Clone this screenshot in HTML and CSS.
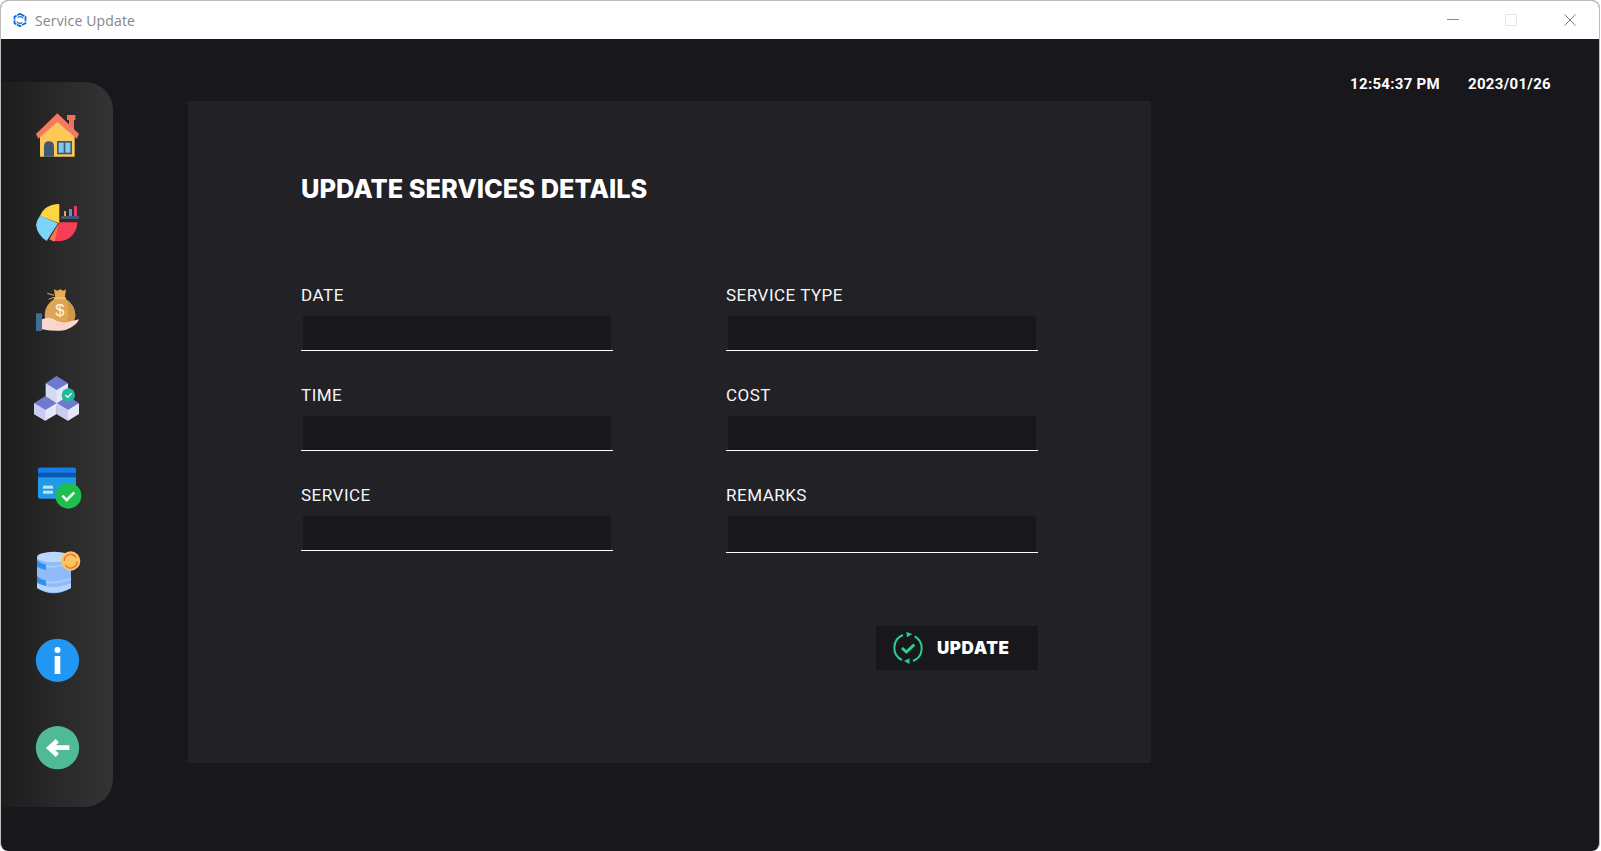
FILE: index.html
```html
<!DOCTYPE html>
<html lang="en">
<head>
<meta charset="utf-8">
<title>Service Update</title>
<link rel="stylesheet" href="styles.css">
</head>
<body>
<div class="window">
  <header class="titlebar">
    <svg class="app-icon" viewBox="0 0 14 14"><path d="M7 .8 12.500 3.800v6.400L7 13.200 1.500 10.200V3.800Z" fill="none" stroke="#1268d8" stroke-width="1.800" stroke-dasharray="5 .8"/><path d="M10 5.500A3.200 3.200 0 0 0 4.800 4.600M4 8.500A3.200 3.200 0 0 0 9.200 9.400" fill="none" stroke="#1a78e6" stroke-width="1.300"/></svg>
    <span class="app-title">Service Update</span>
    <div class="controls">
      <svg class="ctl" viewBox="0 0 12 12"><path d="M0 5.500H12" stroke="#8a8a8a" stroke-width="1"/></svg>
      <svg class="ctl" viewBox="0 0 12 12"><rect x=".5" y=".5" width="11" height="11" rx="1.500" fill="none" stroke="#e4e4e4"/></svg>
      <svg class="ctl ctl-close" viewBox="0 0 12 12"><path d="M.5.500 11.500 11.500M11.500.500 .5 11.500" stroke="#7c7c7c" stroke-width="1"/></svg>
    </div>
  </header>
  <main class="main">
    <nav class="sidebar">
      <svg class="nav-icon" viewBox="105 69 132 132"><path d="M120 125 172 85 224 125V200H120Z" fill="#fdc857"/><rect x="201" y="75" width="25" height="15" fill="#f0705a"/><rect x="207" y="88" width="15" height="30" fill="#f0705a"/><path d="M108 132 172 70 237 132 230 146 172 96 115 146Z" fill="#f4795f"/><path d="M132 200V170Q132 154 147 154T162 170V200Z" fill="#3f5a70"/><rect x="171" y="153" width="45" height="40" fill="#3f5a70"/><rect x="176" y="158" width="15" height="30" fill="#7fc9f1"/><rect x="196" y="158" width="15" height="30" fill="#7fc9f1"/></svg>
      <svg class="nav-icon" viewBox="105 333 132 132"><path d="M178 400V342A58 58 0 0 0 120 378Z" fill="#fcd53f"/><path d="M174 400 120 377A58 58 0 0 0 108 405Q112 435 140 453Z" fill="#7dd3f8"/><path d="M178 397H232A56 56 0 0 1 156 450Z" fill="#f83e56"/><path d="M176 400 148 448A58 58 0 0 0 164 455Z" fill="#f5794c"/><rect x="192" y="363" width="6" height="15" fill="#e8a93a"/><rect x="207" y="357" width="9" height="21" fill="#5d8fe0"/><rect x="222" y="348" width="9" height="30" fill="#e83a62"/><rect x="183" y="378" width="54" height="9" rx="3" fill="#4a5578"/></svg>
      <svg class="nav-icon" viewBox="105 594 132 132"><path d="M162 598 172 602 180 598 190 602 198 598 194 625H166Z" fill="#e6ad54"/><path d="M142 610 162 616M146 628 162 622" stroke="#e6ad54" stroke-width="3"/><path d="M166 624H194Q226 645 226 675 226 705 180 705 134 705 134 675 134 645 166 624Z" fill="#dca655"/><path d="M200 632Q226 650 226 675 226 705 190 705 214 690 200 632Z" fill="#cf9845"/><rect x="162" y="622" width="36" height="5" fill="#f2c56f"/><text class="dollar" x="180" y="677">$</text><path d="M126 688Q150 676 172 694L192 698 237 688Q232 705 205 716 180 728 126 718Z" fill="#fbd6cc"/><path d="M168 703H192" stroke="#eebbb0" stroke-width="2"/><rect x="108" y="670" width="18" height="53" rx="2" fill="#3f6f96"/></svg>
      <svg class="nav-icon" viewBox="105 78 132 132"><path d="M137 100V148L170 168 204 148V100Z" fill="#d5d9f4"/><path d="M170 120V168L204 148V100Z" fill="#e6e8fa"/><path d="M170 78 204 100 170 120 137 100Z" fill="#7079d0"/><path d="M102 160V192L136 212 170 192V160Z" fill="#e6e8fa"/><path d="M136 138 170 160 136 180 102 160Z" fill="#7079d0"/><path d="M170 160V192L204 212 237 192V160Z" fill="#e6e8fa"/><path d="M204 138 237 160 204 180 170 160Z" fill="#7079d0"/><path d="M136 180V212L102 192V160ZM204 180V212L170 192V160Z" fill="#c8cdf0"/><circle cx="205" cy="135" r="20" fill="#1fbb9b"/><path d="M196 135 203 142 215 130" fill="none" stroke="#e8fff8" stroke-width="4"/></svg>
      <svg class="nav-icon" viewBox="105 340 132 132"><rect x="114" y="354" width="114" height="93" rx="6" fill="#1e9ce8"/><path d="M120 354H222Q228 354 228 360V369H114V360Q114 354 120 354Z" fill="#127ee8"/><rect x="114" y="369" width="114" height="14" fill="#0e55b8"/><rect x="129" y="408" width="30" height="9" fill="#bde4f8"/><rect x="129" y="423" width="30" height="9" fill="#bde4f8"/><circle cx="205" cy="438" r="39" fill="#1fbe4f"/><path d="M187 438 200 451 223 428" fill="none" stroke="#e8f8f0" stroke-width="8"/></svg>
      <svg class="nav-icon" viewBox="105 603 132 132"><path d="M111 623Q160 590 213 623V714Q160 746 111 714Z" fill="#8fbcf9"/><ellipse cx="162" cy="621" rx="51" ry="16" fill="#bcd6fc"/><path d="M111 630Q120 640 138 643V660Q120 656 111 650ZM111 678Q120 688 138 692V708Q120 704 111 698Z" fill="#2e8ff0"/><path d="M111 700Q160 722 213 700V714Q160 740 111 714Z" fill="#b5d3fc"/><path d="M138 648Q170 655 213 638M138 696Q170 702 213 686" fill="none" stroke="#a8ccfb" stroke-width="6"/><circle cx="212" cy="633" r="29" fill="#fdc55f"/><path d="M193 633A19 19 0 0 1 228 622M231 633A19 19 0 0 1 196 645" fill="none" stroke="#f06a4a" stroke-width="4"/></svg>
      <svg class="nav-icon" viewBox="105 117 132 132"><circle cx="172.500" cy="181" r="65" fill="#2196f3"/><circle cx="172.500" cy="150" r="9" fill="#fff"/><rect x="164" y="168" width="17" height="54" fill="#fff"/></svg>
      <svg class="nav-icon" viewBox="105 378 132 132"><circle cx="172.500" cy="443" r="65" fill="#4fba93"/><path d="M208 443H150M172 422 148 444 172 466" fill="none" stroke="#fff" stroke-width="14"/></svg>
    </nav>
    <section class="panel">
      <h1 class="heading">UPDATE SERVICES DETAILS</h1>
      <form class="form">
        <label class="field"><span class="label">DATE</span><input class="input" type="text"></label>
        <label class="field"><span class="label">SERVICE TYPE</span><input class="input" type="text"></label>
        <label class="field"><span class="label">TIME</span><input class="input" type="text"></label>
        <label class="field"><span class="label">COST</span><input class="input" type="text"></label>
        <label class="field"><span class="label">SERVICE</span><input class="input" type="text"></label>
        <label class="field"><span class="label">REMARKS</span><input class="input input-tall" type="text"></label>
      </form>
      <div class="actions">
        <button class="update" type="button">
          <svg class="update-icon" viewBox="98 70 90 90"><path d="M128 76A41 41 0 0 0 125 151M158 154A41 41 0 0 0 163 80" fill="none" stroke="#2ecb8c" stroke-width="6"/><path d="M138 67 156 73 140 83ZM148 146 131 154 147 163Z" fill="#2ecb8c"/><path d="M125 115 138 127 162 105" fill="none" stroke="#2ecb8c" stroke-width="9"/></svg>
          <span>UPDATE</span>
        </button>
      </div>
    </section>
    <div class="clock"><span>12:54:37 PM</span><span>2023/01/26</span></div>
  </main>
</div>
</body>
</html>
```
FILE: styles.css
```css
* { box-sizing: border-box; }
html, body { margin: 0; height: 100%; background: #fff; overflow: hidden; }
.window {
  width: 1600px;
  height: 851px;
  display: flex;
  flex-direction: column;
  border: 1px solid #bdbdbd;
  border-bottom: 0;
  border-radius: 8px;
  overflow: hidden;
  background: #17171c;
}
.titlebar {
  flex: 0 0 38px;
  display: flex;
  align-items: center;
  background: #fff;
  padding-left: 12px;
}
.app-icon { width: 14px; height: 14px; }
.app-title {
  margin-left: 8px;
  font: 14px "Open Sans", sans-serif;
  letter-spacing: .15px;
  color: #858585;
}
.controls {
  margin-left: auto;
  display: flex;
  gap: 46px;
  padding-right: 23px;
}
.ctl { width: 12px; height: 12px; }
.ctl-close { margin-left: 1px; }
.main { flex: 1; display: flex; align-items: flex-start; min-height: 0; }
.sidebar {
  width: 112px;
  height: 725px;
  margin-top: 43px;
  padding-top: 31px;
  display: flex;
  flex-direction: column;
  align-items: center;
  gap: 43.6px;
  border-radius: 0 28px 28px 0;
  background: linear-gradient(90deg, #1d1d1d, #343434);
}
.nav-icon { width: 44px; height: 44px; flex: none; overflow: visible; }
.dollar { font: 400 50px "Liberation Sans", sans-serif; fill: #fff6e0; text-anchor: middle; }
.panel {
  width: 963px;
  height: 662px;
  margin: 62px 0 0 75px;
  padding: 78px 113px 0;
  background: #212126;
}
.heading {
  margin: 0;
  font: 800 25.4px/20px Inter, sans-serif;
  color: #fff;
}
.form {
  margin-top: 86px;
  display: grid;
  grid-template-columns: 312px 312px;
  column-gap: 113px;
  grid-auto-rows: 100px;
}
.field { display: flex; flex-direction: column; align-items: stretch; }
.label {
  height: 31px;
  font: 400 17px/20px Roboto, sans-serif;
  letter-spacing: .5px;
  color: #f6f6f6;
}
.input {
  height: 35px;
  padding: 0 2px;
  border: 0;
  border-bottom: 1px solid #fff;
  background: #17171c content-box;
  background-clip: content-box;
}
.input-tall { height: 37px; }
.actions { display: flex; justify-content: flex-end; margin-top: 41px; }
.update {
  width: 162px;
  height: 44px;
  display: flex;
  align-items: center;
  gap: 14px;
  padding: 0 0 0 17px;
  border: 0;
  background: #17171c;
  color: #fff;
  font: 900 17px Inter, sans-serif;
  letter-spacing: .6px;
}
.update-icon { width: 30px; height: 30px; overflow: visible; }
.clock {
  margin: 36px 0 0 auto;
  padding-right: 48px;
  display: flex;
  gap: 28px;
  font: 700 15px/18px Roboto, sans-serif;
  letter-spacing: .3px;
  color: #fff;
}
```
